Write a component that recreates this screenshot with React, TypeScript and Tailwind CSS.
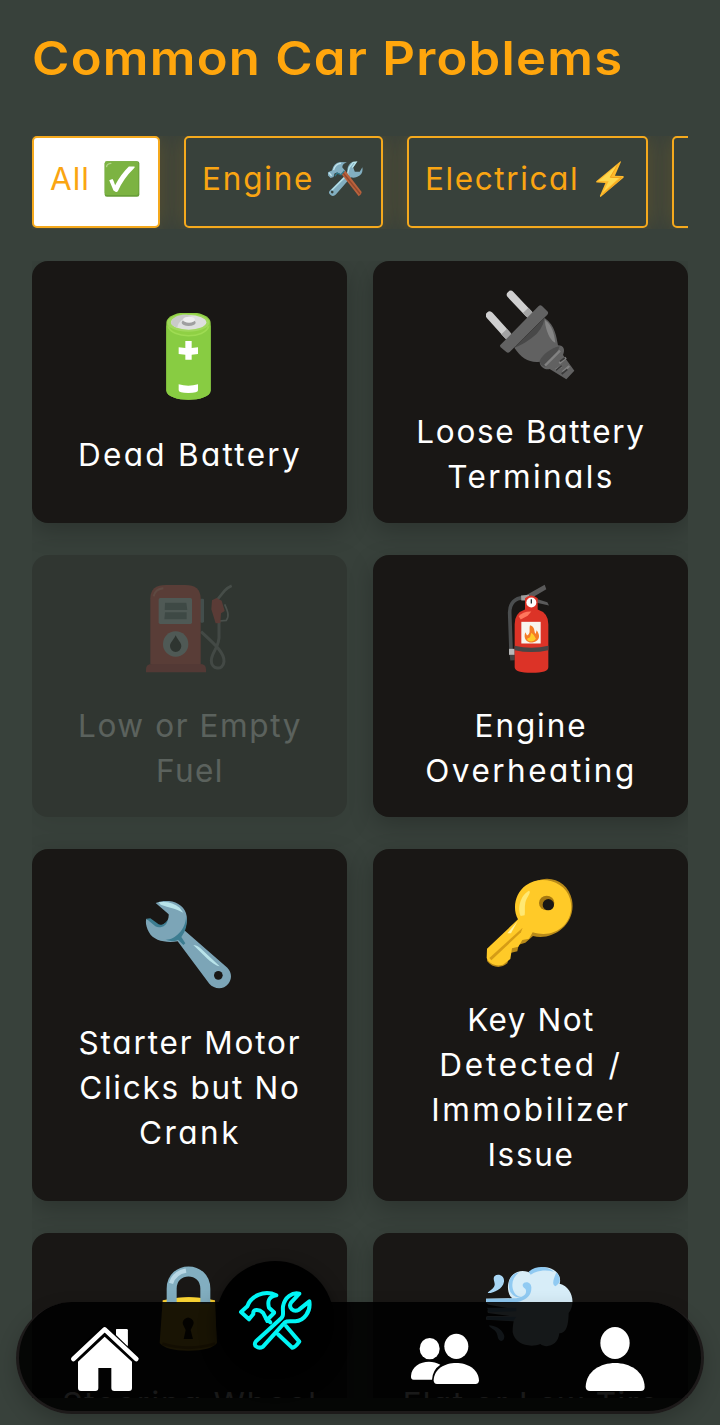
import React from "react";

type Art = () => React.ReactElement;

const CheckArt: Art = () => (
  <svg viewBox="310 122 108 110" className="h-9 w-9 shrink-0">
    <rect x="311" y="123" width="106" height="108" rx="7" fill="#689f38" />
    <rect x="311" y="123" width="103" height="103" rx="7" fill="#7cb342" />
    <path d="M317 139q1-9 13-10" stroke="#b5d58c" strokeWidth="4" fill="none" strokeLinecap="round" />
    <path d="M325 181l10-4q4 5 8 19 18-34 42-57l17 0q3 2-2 6-31 30-48 68-3 5-8 3l-6-4z" fill="#fff" />
  </svg>
);

const ToolsArt: Art = () => (
  <svg viewBox="980 122 108 110" className="h-9 w-9 shrink-0">
    <path d="M988 212l54-53q-4-22 13-33l15 0-11 16 5 13 15 0 8-14q4 24-17 30-9 3-18 1l-46 52q-7 8-16 2-9-6-2-14z" fill="#82aec0" />
    <path d="M1042 160l5-18 12-16 9-1-12 17M994 211l50-50" stroke="#b9e4ea" strokeWidth="4" fill="none" />
    <circle cx="995" cy="217" r="4" fill="#38423c" />
    <path d="M1022 160l12-10 51 67q0 8-9 13z" fill="#b9623d" />
    <path d="M1028 158l52 64" stroke="#94482d" strokeWidth="4" />
    <path d="M982 156l12-5q5-22 24-26l22 1q-16 6-14 16l8 9-12 12-12-6-8 3-3 11-9 3-8-8z" fill="#82aec0" />
    <path d="M999 150q5-20 23-21M985 158l8 9" stroke="#c4e5ed" strokeWidth="4" fill="none" />
    <path d="M1003 168l7-9 12 5 10-12" stroke="#2f7889" strokeWidth="4" fill="none" />
  </svg>
);

const BoltArt: Art = () => (
  <svg viewBox="574 122 108 110" className="h-9 w-9 shrink-0">
    <path d="M660 123l-74 61q-1 4 3 4l25 1-17 40q1 5 5 1l67-57q3-4-2-5l-24-1 18-41q1-4-1-3z" fill="#fdb92c" />
    <path d="M654 131l-61 52 31 1-18 34 50-44-29-3z" fill="#fed84f" />
    <path d="M652 132l-23 40 34 1-56 50" fill="none" stroke="#f2a21b" strokeWidth="3" />
  </svg>
);

const BatteryArt: Art = () => (
  <svg viewBox="46 69 270 270" className="h-[90px] w-[90px]">
    <path d="M110 99c0-43 133-43 133 0v202c0 38-133 38-133 0z" fill="#8fd044" />
    <path d="M110 99c0 50 133 50 133 0v202c0 38-133 38-133 0z" fill="#88cc42" />
    <ellipse cx="176" cy="98" rx="63" ry="27" fill="#a0d85c" />
    <ellipse cx="177" cy="97" rx="53" ry="22" fill="#dedfdf" />
    <path d="M124 98c5-24 48-28 62-19-25 2-42 19-43 34-12-4-19-9-19-15z" fill="#c9caca" />
    <ellipse cx="177" cy="98" rx="21" ry="10" fill="#9f9fa0" />
    <ellipse cx="178" cy="89" rx="18" ry="9" fill="#eee" />
    <path d="M116 109c9 37 110 38 121 0" stroke="#9edb53" strokeWidth="5" fill="none" />
    <path d="M167 153h19v21l19-2v20l-19 2v15h-19v-15l-20-2v-20l20 2z" fill="#fff" />
    <path d="M147 283q29 8 58 0v18q0 8-29 8t-29-8z" fill="#fff" />
  </svg>
);

const PlugArt: Art = () => (
  <svg viewBox="49 30 270 270" className="h-[90px] w-[90px]">
    <path d="M60 106l52 58M123 44l53 56" stroke="#cfcfcf" strokeWidth="23" strokeLinecap="round" />
    <path d="M103 155l17 18M168 91l17 18" stroke="#a3a3a3" strokeWidth="23" />
    <path d="M134 203l91-89c32 23 35 57 40 82 18 0 22 14 15 29l34 47-24 26-50-31c-15 4-30-8-30-22-30 4-55-10-76-42z" fill="#616161" />
    <path d="M91 196L207 78q5-5 10 0l16 16q5 5 0 10L120 216q-5 5-10 0l-18-15z" fill="#626262" />
    <path d="M134 203l91-90q-6 38-40 62-30 22-51 28z" fill="#484848" />
    <path d="M226 120c23 17 27 42 31 68-11-4-23-21-30-54z" fill="#858585" />
    <path d="M210 242c10-18 33-38 60-43-10 27-25 43-42 62-12-3-18-10-18-19z" fill="#4e4e4e" />
    <path d="M226 257l45-45M258 270l18-12M279 276l20-18M269 250l20-17" stroke="#818181" strokeWidth="7" />
    <path d="M259 271l17-14M276 282l17-14M271 244l14-10" stroke="#393939" strokeWidth="5" />
  </svg>
);

const PumpArt: Art = () => (
  <svg viewBox="46 40 270 270" className="h-[90px] w-[90px]">
    <path d="M214 183c44 40 71 65 69 90-3 30-39 22-38-3 0-27 27-41 23-80V153" fill="none" stroke="#777" strokeWidth="9" />
    <path d="M262 88l23-28q9-10 21-15" fill="none" stroke="#888" strokeWidth="8" />
    <path d="M285 101c9 20 15 35 5 48l-20 2" fill="none" stroke="#999" strokeWidth="5" />
    <path d="M261 82l15 8 9 31-11 7-2 29-14 1-13-42 2-27z" fill="#e8322e" />
    <rect x="211" y="84" width="12" height="72" rx="4" fill="#78909c" />
    <path d="M62 280V83q0-40 48-40h55q48 0 48 40v197z" fill="#e63b32" />
    <path d="M49 296q0-16 19-16h142q19 0 19 16v9H49z" fill="#c62828" />
    <path d="M72 77q5-22 29-24" fill="none" stroke="#ff7a6b" strokeWidth="6" />
    <rect x="87" y="82" width="100" height="78" rx="5" fill="#b4c5c9" />
    <path d="M106 96h64l3 22h-68zM106 125h65v21h-67z" fill="#61747a" />
    <circle cx="138" cy="220" r="38" fill="#b4c5c9" />
    <path d="M138 194c-8 17-17 21-17 33a17 17 0 0034 0c0-12-9-16-17-33z" fill="#111" />
  </svg>
);

const ExtinguisherArt: Art = () => (
  <svg viewBox="48 40.5 270 270" className="h-[90px] w-[90px]">
    <path d="M161 82c-25-1-42 16-42 44l4 112" fill="none" stroke="#4b4e4f" strokeWidth="11" />
    <path d="M119 252h15v17l-13 1z" fill="#424242" />
    <path d="M117 235h17v18h-17z" fill="#b8b8b8" />
    <path d="M168 74l56-31 5 13-47 28zM198 85l34 10 5 10-37-8z" fill="#5a5a5a" />
    <path d="M153 75l24-2v17h-23z" fill="#9e9e9e" />
    <path d="M165 83q18-16 38 0v34q32 10 32 44v129q0 17-50 17t-51-17V161q0-34 31-44z" fill="#dc3327" />
    <path d="M146 137q13-15 38-14l-11 13-21 11z" fill="#ff775d" />
    <circle cx="184" cy="96" r="15" fill="#fff" />
    <path d="M184 86v13" stroke="#263238" strokeWidth="4" />
    <path d="M154 154h58v65h-58z" fill="#f8f5ef" />
    <path d="M134 226q50 12 101 0v13q-51 11-101 0z" fill="#494545" />
    <path d="M180 164c17 5 11 21 17 26l3-11c18 26-2 36-15 37-15 0-26-12-19-31l5 10c13-7 5-18 9-31z" fill="#f57c25" />
    <path d="M184 187c13 10 10 16 14 17-6 13-25 11-27 1l9-5z" fill="#ffc928" />
  </svg>
);

const WrenchArt: Art = () => (
  <svg viewBox="45 64 270 270" className="h-[90px] w-[90px]">
    <path d="M77 70c41-17 88 1 93 39 3 20-3 32-7 43l129 112c13 13 15 33 3 48-15 19-42 17-57 0L143 185c-33 5-72 0-86-27-9-17-11-30-8-41l30 16c12 12 39-2 37-29z" fill="#7ca5b7" />
    <path d="M49 117l12-1 25 18c8 5 22-4 27-14-1 18-22 28-37 20zM168 110c0 43-38 73-62 70 17 5 32 5 38 0l16 16 6-5-12-19c14-19 19-38 14-62z" fill="#3d7d91" />
    <path d="M86 68c24-4 45 1 63 16l11 15c-25-13-41-15-68-24z" fill="#b9e4ea" />
    <path d="M190 196c12 2 17 5 28 16l51 48c-13-3-28-15-37-23z" fill="#b9e4ea" />
    <circle cx="265" cy="287" r="13" fill="#191715" />
  </svg>
);

const KeyArt: Art = () => (
  <svg viewBox="48 52 270 270" className="h-[90px] w-[90px]">
    <path d="M195 63c48-24 101 3 111 55 14 77-63 124-117 108l-23 20-20 6-4 20-21 5-9 31c-19 17-46 13-61-7l2-17 99-103z" fill="#b88a19" />
    <path d="M51 264l93-88c-18-33-9-78 24-102 45-33 117-12 132 40 19 65-38 124-112 101l-11 19-20 4-12 20-19 5-5 32-22 17c-22 7-43-4-49-20z" fill="#ffca28" />
    <path d="M58 292l100-91-5 14-89 84z" fill="#d59c16" />
    <path d="M152 166c-12-30 4-66 25-76 9 5-8 19-11 36-3 15 0 25-2 38z" fill="#ffe873" />
    <path d="M112 218l31-37-20 37z" fill="#fff1a1" />
    <ellipse cx="230" cy="127" rx="23" ry="22" fill="#a77910" />
    <ellipse cx="235" cy="132" rx="17" ry="17" fill="#191715" />
  </svg>
);

const LockArt: Art = () => (
  <svg viewBox="436 126 270 270" className="h-[90px] w-[90px]">
    <path d="M489 241q78-18 157 0l6 128q-18 23-86 23t-86-23z" fill="#ffca28" />
    <ellipse cx="567" cy="249" rx="78" ry="17" fill="#fdd835" />
    <path d="M516 251v-45c0-69 101-69 101 0v45" fill="none" stroke="#82aec0" strokeWidth="30" />
    <path d="M514 190q10-32 45-38" fill="none" stroke="#b9d8e5" strokeWidth="13" />
    <path d="M552 318a16 16 0 1127 0l-6 12 7 27h-28l6-27z" fill="#251b08" />
    <path d="M488 371q78 24 158 0" fill="none" stroke="#c18d1b" strokeWidth="9" />
  </svg>
);

const WindArt: Art = () => (
  <svg viewBox="379 126 270 270" className="h-[90px] w-[90px]">
    <path d="M378 236l80-1c-20-15-19-67 15-79 16-6 33-1 42 4 22-28 71-22 84 9 3 8 3 15 1 22 37 9 50 58 27 88-1 49-12 60-28 61-4 38-40 46-57 32-32 13-77 0-83-35 0-14 1-23 3-33l-83-5q-4-8 5-11h66l-65-9q-4-8 2-12l66-1-66-12q-13-8-9-18z" fill="#d7edf8" />
    <path d="M378 236l84-1c24-1 39-10 37-23 0-8-11-8-10-18 4-13 28-9 26 11 0 36-40 42-61 44l-66 1q-14-7-10-14zM382 263h88v11l-82 3zM380 290h90l-8 12-79-3z" fill="#90caf2" />
    <path d="M451 214c-12-32 8-55 27-57-20 17-25 38-15 59 6 12 17 15 26 15-15 5-30-2-38-17zM507 155c25-20 56-17 76 0-25-7-50-4-70 9zM590 157c18 21 10 33-3 42-12-7-5-21 3-42z" fill="#90caf2" />
    <path d="M405 168c10-8 30-2 28 17-3 22-33 35-48 34-4-3 18-11 20-24 1-9-7-19 0-27zM389 316c24 2 42 17 45 33 0 13-8 16-14 12-7-5-5-17-11-25-6-9-24-15-20-20z" fill="#a9d7f5" />
  </svg>
);

type Line = { t: string; k: string };
type Problem = { art: Art; lines: Line[]; faded?: boolean };

const problems: Problem[] = [
  { art: BatteryArt, lines: [{ t: "Dead Battery", k: "tracking-[2.3px]" }] },
  {
    art: PlugArt,
    lines: [
      { t: "Loose Battery", k: "tracking-[1.7px]" },
      { t: "Terminals", k: "tracking-[2.4px]" },
    ],
  },
  {
    art: PumpArt,
    faded: true,
    lines: [
      { t: "Low or Empty", k: "tracking-[1.6px]" },
      { t: "Fuel", k: "tracking-[1.4px]" },
    ],
  },
  {
    art: ExtinguisherArt,
    lines: [
      { t: "Engine", k: "tracking-[1.9px]" },
      { t: "Overheating", k: "tracking-[2.5px]" },
    ],
  },
  {
    art: WrenchArt,
    lines: [
      { t: "Starter Motor", k: "tracking-[1.85px]" },
      { t: "Clicks but No", k: "tracking-[1.75px]" },
      { t: "Crank", k: "tracking-[2.5px]" },
    ],
  },
  {
    art: KeyArt,
    lines: [
      { t: "Key Not", k: "tracking-[1.5px]" },
      { t: "Detected /", k: "tracking-[2.8px]" },
      { t: "Immobilizer", k: "tracking-[2.5px]" },
      { t: "Issue", k: "tracking-[1.7px]" },
    ],
  },
  {
    art: LockArt,
    lines: [
      { t: "Steering Wheel", k: "tracking-[2px]" },
      { t: "Locked", k: "tracking-[1.5px]" },
    ],
  },
  {
    art: WindArt,
    lines: [
      { t: "Flat or Low Tire", k: "tracking-[1.5px]" },
      { t: "Pressure", k: "tracking-[1.5px]" },
    ],
  },
];

function ProblemCard({ art: Picture, lines, faded }: Problem) {
  return (
    <article
      className={
        "flex flex-col items-center justify-center rounded-2xl bg-[#191715] pt-[23px] pb-6 shadow-[0_8px_24px_rgba(0,0,0,0.22)] " +
        (faded ? "text-white/75 opacity-25" : "text-white")
      }
    >
      <div className={"mt-1.5 mb-[29px] h-[90px] " + (faded ? "opacity-80" : "")}>
        <Picture />
      </div>
      <h2 className="pl-px text-center text-[31.5px] leading-[45px] font-normal whitespace-nowrap">
        {lines.map((l) => (
          <span key={l.t} className={"block " + l.k}>
            {l.t}
          </span>
        ))}
      </h2>
    </article>
  );
}

const filterBase =
  "flex h-[92px] shrink-0 items-center justify-between rounded-[5px] border-2 border-[#f5a91d] pr-[18px] pl-4 pb-1.5 text-[31.5px] text-[#faa512] shadow-[0_0_24px_rgba(255,165,0,0.2)] ";

export default function App() {
  return (
    <div className="relative h-[1425px] w-[720px] overflow-hidden bg-[#38413b] px-8 font-['Inter',sans-serif] [font-feature-settings:'cv11']">
      <h1 className="origin-left scale-x-[1.08] pt-[22px] text-[47px] leading-[72px] font-semibold tracking-[1.15px] whitespace-nowrap text-[#ffa60d]">
        Common Car Problems
      </h1>

      <div className="mt-[42px] flex h-[93px] gap-6 overflow-hidden">
        <button className={filterBase + "w-32 bg-white"}>
          <span className="tracking-[1px]">All</span>
          <CheckArt />
        </button>
        <button className={filterBase + "w-[199px]"}>
          <span className="tracking-[1.8px]">Engine</span>
          <ToolsArt />
        </button>
        <button className={filterBase + "w-[241px]"}>
          <span className="tracking-[1.6px]">Electrical</span>
          <BoltArt />
        </button>
        <div className={filterBase + "w-[210px]"} />
      </div>

      <main className="mt-8 h-[1137px] overflow-hidden">
        <div className="grid grid-cols-2 gap-x-[26px] gap-y-8">
          {problems.map((p) => (
            <ProblemCard key={p.lines[0].t} {...p} />
          ))}
        </div>
      </main>

      <nav className="absolute top-[1302px] left-4 flex h-28 w-[688px] rounded-full border-[3px] border-t-0 border-[#1d1a1a] bg-black/90 shadow-[0_8px_20px_rgba(0,0,0,0.2)]">
        <a className="absolute top-[24px] left-[51px]">
          <svg viewBox="210 318 210 198" className="h-[66px] w-[70px]" fill="#fff">
            <path d="M348 350v-19q0-4 4-4h27q4 0 4 4v55z" />
            <path d="M220 417l94-89 95 89" fill="none" stroke="#000" strokeWidth="24" strokeLinecap="round" strokeLinejoin="round" />
            <path d="M220 417l94-89 95 89" fill="none" stroke="#fff" strokeWidth="14" strokeLinecap="round" strokeLinejoin="round" />
            <path d="M348 345v-14q0-4 4-4h27q4 0 4 4v48z" />
            <path d="M234 425l80-75 82 75v79q0 9-9 9h-44q-9 0-9-9v-60h-39v60q0 9-9 9h-43q-9 0-9-9z" />
          </svg>
        </a>
        <a className="absolute -top-[41px] left-[197px] flex h-[118px] w-[118px] items-center justify-center rounded-full bg-black shadow-[0_6px_16px_rgba(0,0,0,0.5)]">
          <svg
            viewBox="714 212 225 183"
            className="h-[61px] w-[75px]"
            fill="none"
            stroke="#00f5f5"
            strokeWidth="12"
            strokeLinejoin="round"
            strokeLinecap="round"
          >
            <path d="M742 261c9-29 50-51 87-33-24 4-27 19-22 37l15 14M742 261l-19 17 24 22 13-16c-3-15 17-15 29-4l13 25" />
            <path d="M807 296l15-15M798 297l13 12" />
            <path d="M834 345l43 40q8 0 21-18l-40-47" />
            <path d="M768 366l70-64c17-12 9-22 11-41 5-28 29-43 49-38l-25 27c-9 15 7 30 24 21l31-25c5 31-16 58-42 60-21 0-28-3-37 9l-60 67c-15 8-32-4-21-16z" />
          </svg>
        </a>
        <a className="absolute top-[31px] left-[391px]">
          <svg viewBox="150 340 210 156" className="h-[52px] w-[70px]" fill="#fff">
            <ellipse cx="209" cy="387" rx="30" ry="32" />
            <path d="M241 435q-23 15-25 45h-55q-9 0-8-11c2-39 53-54 88-34z" />
            <ellipse cx="289" cy="380" rx="36" ry="38" />
            <path d="M221 482c2-69 132-69 136 0q0 11-11 11H231q-10 0-10-11z" />
          </svg>
        </a>
        <a className="absolute top-[24px] left-[566px]">
          <svg viewBox="675 318 180 198" className="h-[66px] w-[60px]" fill="#fff">
            <ellipse cx="765" cy="369" rx="44" ry="48" />
            <path d="M677 501c3-96 174-96 177 0q0 12-12 12H690q-12 0-13-12z" />
          </svg>
        </a>
      </nav>
    </div>
  );
}
